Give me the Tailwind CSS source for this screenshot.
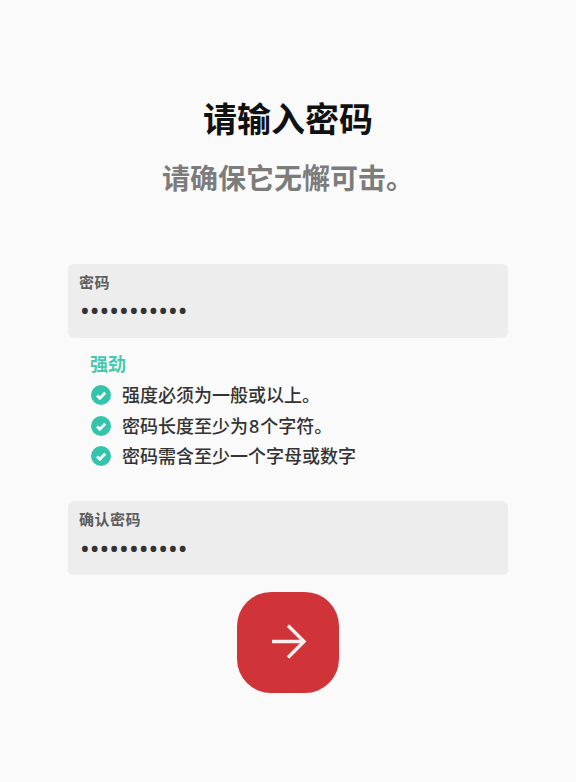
<!DOCTYPE html>
<html lang="zh">
<head>
  <meta charset="UTF-8" />
  <title>密码</title>
  <script src="https://cdn.jsdelivr.net/npm/@tailwindcss/browser@4"></script>
</head>
<body class="min-h-screen bg-[#fafafa] font-['Noto_Sans','Noto_Sans_CJK_SC',sans-serif]">
  <div class="w-[440px] mx-auto pt-[96px]">
    <h1 class="text-center text-[34px] leading-[46px] font-bold text-[#111]">请输入密码</h1>
    <p class="mt-[17px] text-center text-[28px] leading-[38px] font-bold text-[#7c7c7c]">请确保它无懈可击。</p>

    <!-- Password -->
    <div class="mt-[67px] h-[74px] bg-[#ededed] rounded-md px-3 pt-[8px]">
      <div class="text-[15px] tracking-[0.5px] leading-5 font-bold text-[#5c5c5c] -ml-px">密码</div>
      <div class="mt-[5.5px] text-[26px] leading-6 text-[#333]">•••••••••••</div>
    </div>

    <!-- Strength -->
    <div class="mt-[14px] pl-[22px]">
      <div class="text-lg leading-6 font-bold text-[#45c9ae]">强劲</div>
      <ul class="mt-[7.5px] flex flex-col gap-[7.5px] text-[#333]">
        <li class="flex items-center gap-[11px] h-[23px] text-lg font-medium">
          <svg class="w-[20px] h-[20px] ml-[1px]" viewBox="0 0 20 20"><circle cx="10" cy="10" r="10" fill="#33c5ac"/><path d="M6 10.5l2.8 2.8 5.4-5.6" fill="none" stroke="#fff" stroke-width="2.8"/></svg>
          <span>强度必须为一般或以上。</span>
        </li>
        <li class="flex items-center gap-[11px] h-[23px] text-lg font-medium">
          <svg class="w-[20px] h-[20px] ml-[1px]" viewBox="0 0 20 20"><circle cx="10" cy="10" r="10" fill="#33c5ac"/><path d="M6 10.5l2.8 2.8 5.4-5.6" fill="none" stroke="#fff" stroke-width="2.8"/></svg>
          <span>密码长度至少为<span class="px-px">8</span>个字符。</span>
        </li>
        <li class="flex items-center gap-[11px] h-[23px] text-lg font-medium">
          <svg class="w-[20px] h-[20px] ml-[1px]" viewBox="0 0 20 20"><circle cx="10" cy="10" r="10" fill="#33c5ac"/><path d="M6 10.5l2.8 2.8 5.4-5.6" fill="none" stroke="#fff" stroke-width="2.8"/></svg>
          <span>密码需含至少一个字母或数字</span>
        </li>
      </ul>
    </div>

    <!-- Confirm -->
    <div class="mt-[33.5px] h-[74px] bg-[#ededed] rounded-md px-3 pt-[8px]">
      <div class="text-[15px] tracking-[0.5px] leading-5 font-bold text-[#5c5c5c] -ml-px">确认密码</div>
      <div class="mt-[6.5px] text-[26px] leading-6 text-[#333]">•••••••••••</div>
    </div>

    <button class="mx-auto mt-[17px] w-[102px] h-[101px] rounded-[34px] bg-[#d13438] flex items-center justify-center">
      <svg class="w-[36px] h-[36px] overflow-visible" viewBox="0 0 36 36" fill="none" stroke="#fbeeee" stroke-width="3.4"><path d="M2 16.5h32M18 .5l16 16-16 16"/></svg>
    </button>
  </div>
</body>
</html>
